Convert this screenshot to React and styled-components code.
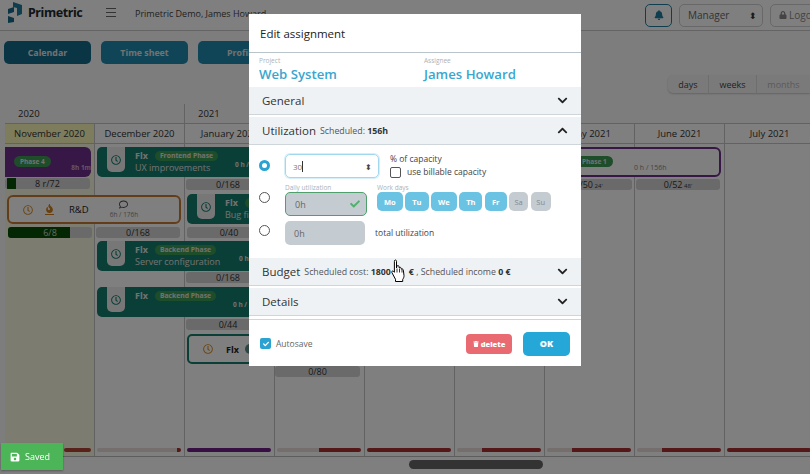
import React from 'react';
import styled, { createGlobalStyle } from 'styled-components';
import { FaBell, FaLock, FaChevronDown, FaChevronUp, FaCheck, FaSave, FaTrash, FaRegClock, FaRegComment, FaFire } from 'react-icons/fa';

const GlobalStyle = createGlobalStyle`
  html, body { margin: 0; padding: 0; background: #fff; overflow: hidden; }
  * { box-sizing: border-box; }
  body { font-family: "Open Sans", "Noto Sans", sans-serif; color: #212529; }
`;

const months = [
  { name: 'November 2020', today: true, inset: 57, bar: [[100, '#b04434']] },
  { name: 'December 2020', bar: [[95, '#e8dcda'], [5, '#a83030']] },
  { name: 'January 2021', bar: [[100, '#6e1f86']] },
  { name: 'February 2021', bar: [[50, '#e8dcda'], [50, '#a83030']] },
  { name: 'March 2021', bar: [[100, '#a83030']] },
  { name: 'April 2021', bar: [[30, '#e8dcda'], [70, '#a83030']] },
  { name: 'May 2021', bar: [[30, '#e8dcda'], [70, '#a83030']] },
  { name: 'June 2021', bar: [[30, '#e8dcda'], [70, '#a83030']] },
  { name: 'July 2021', bar: [[100, '#a83030']] },
];

const days = [
  { label: 'Mo', on: true }, { label: 'Tu', on: true }, { label: 'We', on: true },
  { label: 'Th', on: true }, { label: 'Fr', on: true }, { label: 'Sa' }, { label: 'Su' },
];

const capacities = [
  { x: 5, y: 178, w: 85, label: '8 r/72', fill: 11 },
  { x: 8, y: 227, w: 84, label: '6/8', fill: 74, light: true },
  { x: 96, y: 227, w: 84, label: '0/168' },
  { x: 186, y: 179, w: 84, label: '0/168' },
  { x: 187, y: 227, w: 84, label: '0/40' },
  { x: 186, y: 272, w: 84, label: '0/168' },
  { x: 186, y: 319, w: 84, label: '0/44' },
  { x: 275, y: 366, w: 85, label: '0/80' },
  { x: 545, y: 179, w: 87, label: '0/50', small: '24\'' },
  { x: 636, y: 179, w: 84, label: '0/52', small: '48\'' },
];

const fixes = [
  { x: 97, y: 147, w: 160, phase: 'Frontend Phase', title: 'UX improvements', hours: '0 h /', hoursAt: 138 },
  { x: 187, y: 194, w: 70, phase: 'Frontend Phase', title: 'Bug fixes' },
  { x: 97, y: 241, w: 160, phase: 'Backend Phase', title: 'Server configuration', hours: '0 h', hoursAt: 142 },
  { x: 97, y: 287, w: 160, phase: 'Backend Phase', hours: '0 h /', hoursAt: 136 },
];

const Logo = () => (
  <svg width="15" height="21" viewBox="0 0 15 21">
    <path d="M5 0l9 3v9l-5 2V6L5 5z" fill="#1f7f9f" />
    <path d="M0 7l6-2v5l-6 2zM0 14l6 2v4l-6 1z" fill="#166a88" />
  </svg>
);

const HandCursor = () => (
  <CursorWrap>
    <svg width="16" height="24" viewBox="0 0 16 24">
      <path
        d="M3.5 1.5c.9-.9 2-.4 2 .8V9l.4-2c1-.8 2-.4 2.100.5l.1 1.300c.8-.8 2-.5 2.100.6v.8c.9-.6 2-.2 2.100.9l.7 5.400c.1 1.500-.6 3-1.300 4v2H4.500v-2.200L.9 13.600c-.6-1 .5-2.100 1.500-1.300l1 1V2.500z"
        fill="#fff"
        stroke="#000"
        strokeWidth="1"
      />
      <path d="M6 9.500v4M8.500 9.500v4M11 10.500v3" stroke="#000" strokeWidth="0.8" />
    </svg>
  </CursorWrap>
);

const App = () => {
  return (
    <>
      <GlobalStyle />
      <Page>
        <Header>
          <Brand>
            <Logo />
            <BrandName>Primetric</BrandName>
          </Brand>
          <Burger>
            <span /><span /><span />
          </Burger>
          <HeaderTitle>Primetric Demo, James Howard</HeaderTitle>
          <HeaderRight>
            <BellButton><FaBell size={10} /></BellButton>
            <RoleSelect>Manager<Spinner>⬍</Spinner></RoleSelect>
            <LogoutButton><FaLock size={8} /> Logout</LogoutButton>
          </HeaderRight>
        </Header>
        <NavRow>
          <NavButton $active>Calendar</NavButton>
          <NavButton>Time sheet</NavButton>
          <NavButton>Profile</NavButton>
        </NavRow>
        <ViewRow>
          <ViewTabs>
            <ViewTab $width={40}>days</ViewTab>
            <ViewTab $width={48}>weeks</ViewTab>
            <ViewTab $width={54} $disabled>months</ViewTab>
          </ViewTabs>
        </ViewRow>
        <Timeline>
          <YearRow>
            <YearCell $span={2}>2020</YearCell>
            <YearCell $span={7}>2021</YearCell>
          </YearRow>
          <MonthRow>
            {months.map((m) => (
              <MonthCell key={m.name} $today={m.today}>{m.name}</MonthCell>
            ))}
          </MonthRow>
          <Body>
            {months.map((m) => (
              <Column key={m.name} $today={m.today}>
                <LoadBar $inset={m.inset}>
                  {m.bar.map(([w, c], i) => (
                    <LoadPart key={i} $color={c} style={{ width: `${w}%` }} />
                  ))}
                </LoadBar>
              </Column>
            ))}
            <PurpleCard>
              <PhaseBadge>Phase 4</PhaseBadge>
              <CardHours>8h 1m</CardHours>
            </PurpleCard>
            <OutlinePhase>
              <PhaseBadge>Phase 1</PhaseBadge>
              <OutlineHours>0 h / 156h</OutlineHours>
            </OutlinePhase>
            <RdCard>
              <RdClock><FaRegClock size={10} /></RdClock>
              <RdFlame><FaFire size={9} /></RdFlame>
              <RdName>R&amp;D</RdName>
              <RdMeta>
                <FaRegComment size={9} />
                <span>6h / 176h</span>
              </RdMeta>
            </RdCard>
            {fixes.map((f) => (
              <FixCard key={f.y} $x={f.x} $y={f.y} $w={f.w}>
                <FixTab><FaRegClock size={10} /></FixTab>
                <FixText>
                  <FixHead>
                    Flx
                    <FixPhase>{f.phase}</FixPhase>
                  </FixHead>
                  {f.title && <FixTitle>{f.title}</FixTitle>}
                </FixText>
                {f.hours && <FixHours $left={f.hoursAt}>{f.hours}</FixHours>}
              </FixCard>
            ))}
            <FixOutline>
              <RdClock><FaRegClock size={10} /></RdClock>
              <FixOutlineName>Flx</FixOutlineName>
              <FixOutlineDot />
            </FixOutline>
            {capacities.map((c) => (
              <Capacity key={`${c.x}-${c.y}`} $x={c.x} $y={c.y} $w={c.w}>
                {c.fill && <CapacityFill style={{ width: `${c.fill}%` }} $thin={c.fill < 20} />}
                <CapacityLabel $light={c.light}>{c.label}{c.small && <small> {c.small}</small>}</CapacityLabel>
              </Capacity>
            ))}
          </Body>
          <ScrollTrack>
            <ScrollThumb />
          </ScrollTrack>
        </Timeline>
      </Page>

      <Backdrop />

      <Modal>
        <ModalTitle>Edit assignment</ModalTitle>
        <InfoRow>
          <InfoCell>
            <InfoLabel>Project</InfoLabel>
            <InfoValue>Web System</InfoValue>
          </InfoCell>
          <InfoCell>
            <InfoLabel>Assignee</InfoLabel>
            <InfoValue>James Howard</InfoValue>
          </InfoCell>
        </InfoRow>

        <Section>
          <SectionName>General</SectionName>
          <Chevron><FaChevronDown size={11} /></Chevron>
        </Section>
        <Section>
          <SectionName>Utilization</SectionName>
          <SectionNote>Scheduled: <b>156h</b></SectionNote>
          <Chevron><FaChevronUp size={11} /></Chevron>
        </Section>

        <UtilBody>
          <UtilRow $height={31}>
            <Radio $checked $top={5.5} />
            <PercentInput>
              <span>30<Caret /></span>
              <InputSpinner>⬍</InputSpinner>
            </PercentInput>
            <PercentNotes>
              <span>% of capacity</span>
              <BillableRow><EmptyCheck />use billable capacity</BillableRow>
            </PercentNotes>
          </UtilRow>
          <UtilRow $height={36}>
            <Radio $top={6.5} />
            <Field>
              <FieldLabel>Daily utilization</FieldLabel>
              <HoursInput $valid $width={82}>0h<ValidMark><FaCheck size={10} /></ValidMark></HoursInput>
            </Field>
            <Field>
              <FieldLabel>Work days</FieldLabel>
              <DayRow>
                {days.map((d) => (
                  <DayChip key={d.label} $on={d.on}>{d.label}</DayChip>
                ))}
              </DayRow>
            </Field>
          </UtilRow>
          <UtilRow $height={32}>
            <Radio $top={3.5} />
            <HoursInput $width={80}>0h</HoursInput>
            <TotalLabel>total utilization</TotalLabel>
          </UtilRow>
        </UtilBody>

        <Section>
          <SectionName>Budget</SectionName>
          <SectionNote>Scheduled cost: <b>1800</b><CostGap /><b>€</b> , Scheduled income <b>0 €</b></SectionNote>
          <Chevron><FaChevronDown size={11} /></Chevron>
        </Section>
        <Section>
          <SectionName>Details</SectionName>
          <Chevron><FaChevronDown size={11} /></Chevron>
        </Section>

        <ModalFooter>
          <AutoCheck><FaCheck size={6} /></AutoCheck>
          <AutoLabel>Autosave</AutoLabel>
          <DeleteButton><FaTrash size={6} /> delete</DeleteButton>
          <OkButton>OK</OkButton>
        </ModalFooter>
      </Modal>

      <HandCursor />

      <Toast><FaSave size={10} /> Saved</Toast>
    </>
  );
};

const Page = styled.div`
  width: 810px;
  height: 474px;
  overflow: hidden;
  display: flex;
  flex-direction: column;
  background: #fafafa;
`;

const Header = styled.header`
  height: 31px;
  flex: none;
  display: flex;
  align-items: center;
  padding: 0 0 6px 8px;
  background: #fff;
  border-bottom: 1px solid #c8c8c8;
`;

const Brand = styled.div`
  display: flex;
  align-items: center;
  gap: 5px;
  width: 98px;
`;

const BrandName = styled.span`
  font-size: 12.500px;
  font-weight: 700;
  letter-spacing: -0.4px;
  font-family: "Noto Sans", sans-serif;
  color: #1d2a30;
`;

const Burger = styled.div`
  width: 10px;
  display: flex;
  flex-direction: column;
  gap: 3px;
  margin-right: 19px;

  span {
    height: 1px;
    background: #666;
  }
`;

const HeaderTitle = styled.div`
  font-size: 9px;
  color: #444;
  white-space: nowrap;
  margin-top: 2px;
`;

const HeaderRight = styled.div`
  margin-left: auto;
  display: flex;
  align-items: center;
  gap: 7px;
  margin-top: 6px;
  margin-right: -20px;
`;

const BellButton = styled.div`
  width: 27px;
  height: 23px;
  border: 1px solid #1f7f9f;
  border-radius: 5px;
  display: flex;
  align-items: center;
  justify-content: center;
  color: #1f7f9f;
  background: #fff;
`;

const RoleSelect = styled.div`
  width: 84px;
  height: 23px;
  border: 1px solid #d0d0d0;
  border-radius: 5px;
  display: flex;
  align-items: center;
  justify-content: space-between;
  padding: 0 5px 0 8px;
  font-size: 10px;
  color: #666;
  background: #fff;
`;

const Spinner = styled.span`
  font-size: 9px;
  color: #333;
`;

const LogoutButton = styled.div`
  width: 60px;
  height: 23px;
  border: 1px solid #d0d0d0;
  border-radius: 5px;
  display: flex;
  align-items: center;
  gap: 2px;
  padding-left: 8px;
  font-size: 10px;
  color: #888;
  white-space: nowrap;
`;

const NavRow = styled.nav`
  flex: none;
  display: flex;
  gap: 10px;
  padding: 10px 0 0 4px;
`;

const NavButton = styled.div`
  width: 87px;
  height: 23px;
  border-radius: 5px;
  display: flex;
  align-items: center;
  justify-content: center;
  font-size: 8.800px;
  font-weight: 700;
  color: #e4e4e4;
  background: ${(p) => (p.$active ? '#146a89' : '#1e8bad')};
`;

const ViewRow = styled.div`
  flex: none;
  height: 40px;
  display: flex;
  justify-content: flex-end;
  padding-top: 11px;
`;

const ViewTabs = styled.div`
  display: flex;
  height: 18px;
  border-radius: 5px 0 0 5px;
  background: #f5f5f5;
  box-shadow: 0 1px 2px rgba(0, 0, 0, 0.2);
`;

const ViewTab = styled.div`
  width: ${(p) => p.$width}px;
  display: flex;
  align-items: center;
  justify-content: center;
  font-size: 9px;
  color: ${(p) => (p.$disabled ? '#b5b5b5' : '#444')};
  border-left: 1px solid #ddd;

  &:first-child {
    border-left: 0;
  }
`;

const Timeline = styled.section`
  flex: 1;
  min-height: 0;
  display: flex;
  flex-direction: column;
  margin-left: 5px;
  background: #fff;
  overflow: hidden;
`;

const YearRow = styled.div`
  flex: none;
  display: flex;
  height: 20px;
  background: #fbfbfb;
  border-bottom: 1px solid #c4c4c4;
`;

const YearCell = styled.div`
  width: ${(p) => p.$span * 90}px;
  flex: none;
  padding-left: 13px;
  display: flex;
  align-items: center;
  font-size: 9.500px;
  font-weight: 500;
  color: #333;
  border-right: 1px solid #c4c4c4;
`;

const MonthRow = styled.div`
  flex: none;
  display: flex;
  height: 20px;
  border-bottom: 1px solid #c4c4c4;
`;

const MonthCell = styled.div`
  width: 90px;
  flex: none;
  display: flex;
  align-items: center;
  justify-content: center;
  white-space: nowrap;
  overflow: hidden;
  font-size: 9.500px;
  font-weight: 500;
  color: #333;
  background: ${(p) => (p.$today ? '#fbf9b8' : '#fff')};
  border-right: 1px solid #c4c4c4;
`;

const Body = styled.div`
  flex: 1;
  min-height: 0;
  position: relative;
  display: flex;
  margin-left: -5px;
  padding-left: 5px;
  border-bottom: 1px solid #bbb;
`;

const Column = styled.div`
  width: 90px;
  flex: none;
  display: flex;
  flex-direction: column;
  justify-content: flex-end;
  padding: 0 3px 4px 2px;
  background: ${(p) => (p.$today ? '#f9f8e2' : '#fff')};
  border-right: 1px solid #c4c4c4;
`;

const LoadBar = styled.div`
  height: 4px;
  display: flex;
  border-radius: 2px;
  overflow: hidden;
  margin-left: ${(p) => p.$inset || 0}px;
`;

const LoadPart = styled.div`
  height: 100%;
  background: ${(p) => p.$color};
`;

const PurpleCard = styled.div`
  position: absolute;
  left: 4px;
  top: 3px;
  width: 87px;
  height: 30px;
  border-radius: 0 6px 6px 0;
  background: #6e2f8a;
`;

const PhaseBadge = styled.span`
  position: absolute;
  left: 10px;
  top: 9px;
  height: 11px;
  padding: 0 6px;
  border-radius: 6px;
  font-size: 6.500px;
  font-weight: 700;
  line-height: 11px;
  color: #e4e4e4;
  white-space: nowrap;
  background: #3d9a55;
`;

const CardHours = styled.span`
  position: absolute;
  right: 0;
  bottom: 5px;
  font-size: 6.500px;
  font-weight: 700;
  white-space: nowrap;
  color: #c9a9d8;
`;

const OutlinePhase = styled.div`
  position: absolute;
  left: 500px;
  top: 3px;
  width: 221px;
  height: 30px;
  border: 2px solid #6e2f8a;
  border-radius: 6px;
  background: #fff;

  ${PhaseBadge} {
    left: 74px;
    top: 7px;
  }
`;

const OutlineHours = styled.span`
  position: absolute;
  left: 132px;
  bottom: 3px;
  font-size: 7px;
  color: #888;
  white-space: nowrap;
`;

const RdCard = styled.div`
  position: absolute;
  left: 7px;
  top: 51px;
  width: 174px;
  height: 29px;
  border: 2px solid #c77a35;
  border-radius: 6px;
  background: #fff;
  display: flex;
  align-items: center;
  padding-left: 14px;
`;

const RdClock = styled.span`
  display: flex;
  color: #d98f2c;
  margin-right: 12px;
`;

const RdFlame = styled.span`
  display: flex;
  color: #d07f1c;
  padding-bottom: 1px;
  border-bottom: 1px solid #d07f1c;
  margin-right: 15px;
`;

const RdName = styled.span`
  font-size: 9.500px;
  font-weight: 500;
  color: #222;
  margin-right: 21px;
`;

const RdMeta = styled.div`
  display: flex;
  flex-direction: column;
  align-items: center;
  gap: 1px;
  font-size: 6.500px;
  color: #888;
  white-space: nowrap;

  svg {
    color: #444;
  }
`;

const FixCard = styled.div`
  position: absolute;
  left: ${(p) => p.$x}px;
  top: ${(p) => p.$y - 144}px;
  width: ${(p) => p.$w}px;
  height: 30px;
  display: flex;
  padding-left: 10px;
  border-radius: 5px;
  background: #137f6d;
  color: #e4e4e4;
`;

const FixTab = styled.div`
  width: 18px;
  height: 25px;
  flex: none;
  display: flex;
  align-items: center;
  justify-content: center;
  border-radius: 0 0 5px 5px;
  background: #eee;
  color: #137f6d;
`;

const FixText = styled.div`
  margin-left: 10px;
  padding-top: 2px;
  white-space: nowrap;
`;

const FixHead = styled.div`
  display: flex;
  align-items: center;
  gap: 7px;
  height: 13px;
  font-size: 9px;
  font-weight: 700;
`;

const FixPhase = styled.span`
  padding: 0 5px;
  height: 10px;
  border-radius: 5px;
  font-size: 6.800px;
  line-height: 10px;
  background: #3d9a55;
`;

const FixTitle = styled.div`
  font-size: 9px;
  line-height: 12px;
`;

const FixHours = styled.span`
  position: absolute;
  left: ${(p) => p.$left}px;
  bottom: 8px;
  font-size: 6.500px;
  font-weight: 700;
  white-space: nowrap;
`;

const FixOutline = styled.div`
  position: absolute;
  left: 187px;
  top: 190px;
  width: 70px;
  height: 30px;
  display: flex;
  align-items: center;
  padding-left: 14px;
  border: 2px solid #137f6d;
  border-radius: 5px;
  background: #fff;
`;

const FixOutlineName = styled.span`
  margin-left: 1px;
  font-size: 9px;
  font-weight: 700;
  color: #222;
`;

const FixOutlineDot = styled.span`
  width: 10px;
  height: 10px;
  margin-left: 6px;
  border-radius: 5px;
  background: #5b8a87;
`;

const Capacity = styled.div`
  position: absolute;
  left: ${(p) => p.$x}px;
  top: ${(p) => p.$y - 144}px;
  width: ${(p) => p.$w}px;
  height: 11px;
  border-radius: 3px;
  overflow: hidden;
  background: #d5d5d5;
`;

const CapacityFill = styled.div`
  position: absolute;
  left: ${(p) => (p.$thin ? '2px' : 0)};
  top: 0;
  bottom: 0;
  background: #064f06;
`;

const CapacityLabel = styled.div`
  position: relative;
  text-align: center;
  font-size: 9px;
  line-height: 11px;
  color: ${(p) => (p.$light ? '#c9d6c9' : '#333')};

  small {
    font-size: 6px;
  }
`;

const ScrollTrack = styled.div`
  flex: none;
  height: 17px;
  margin-left: -5px;
  padding: 3px 0 0 409px;
`;

const ScrollThumb = styled.div`
  width: 134px;
  height: 9px;
  border-radius: 5px;
  background: #666;
`;

const Backdrop = styled.div`
  position: fixed;
  inset: 0;
  z-index: 10;
  background: rgba(0, 0, 0, 0.5);
`;

const Modal = styled.div`
  position: fixed;
  left: 249px;
  top: 14px;
  z-index: 20;
  width: 332px;
  height: 352px;
  display: flex;
  flex-direction: column;
  background: #fff;
  overflow: hidden;
`;

const ModalTitle = styled.div`
  flex: none;
  height: 39px;
  padding-left: 11px;
  display: flex;
  align-items: center;
  font-size: 11.500px;
  color: #222;
  border-bottom: 1px solid #b9c3ca;
`;

const InfoRow = styled.div`
  flex: none;
  height: 34px;
  display: grid;
  grid-template-columns: 165px 1fr;
  padding: 3px 0 0 10px;
`;

const InfoCell = styled.div`
  display: flex;
  flex-direction: column;
`;

const InfoLabel = styled.span`
  font-size: 6.500px;
  line-height: 9px;
  color: #aab2b8;
`;

const InfoValue = styled.span`
  font-size: 13.200px;
  line-height: 18px;
  font-weight: 600;
  color: #3aa6cf;
`;

const Section = styled.div`
  flex: none;
  height: 28px;
  display: flex;
  align-items: center;
  padding: 0 13px;
  margin-bottom: 2px;
  background: #eef2f5;
  border-bottom: 1px solid #cfd6db;
`;

const SectionName = styled.span`
  font-size: 11.500px;
  color: #333;
`;

const SectionNote = styled.span`
  margin-left: 4px;
  font-size: 8.800px;
  color: #555;
  white-space: nowrap;

  b {
    color: #333;
  }
`;

const CostGap = styled.span`
  display: inline-block;
  width: 18px;
`;

const Chevron = styled.span`
  margin-left: auto;
  display: flex;
  color: #222;
`;

const UtilBody = styled.div`
  flex: none;
  height: 112px;
  margin-top: -1px;
  padding: 8px 0 0 10px;
  display: flex;
  flex-direction: column;
`;

const UtilRow = styled.div`
  height: ${(p) => p.$height}px;
  display: flex;
  align-items: flex-start;
`;

const Radio = styled.span`
  width: 11px;
  height: 11px;
  flex: none;
  margin-top: ${(p) => p.$top}px;
  margin-right: 15px;
  border-radius: 50%;
  border: ${(p) => (p.$checked ? '3.500px solid #2aa3d2' : '1px solid #555')};
  background: #fff;
`;

const PercentInput = styled.div`
  width: 94px;
  height: 24px;
  flex: none;
  display: flex;
  align-items: center;
  justify-content: space-between;
  padding: 0 6px 0 7px;
  border: 1px solid #9fd8ef;
  border-radius: 5px;
  box-shadow: 0 0 0 1px #d6eff9;
  font-size: 8px;
  color: #777;
`;

const Caret = styled.span`
  display: inline-block;
  width: 1px;
  height: 11px;
  vertical-align: -2px;
  background: #333;
`;

const InputSpinner = styled.span`
  font-size: 8px;
  color: #444;
`;

const PercentNotes = styled.div`
  margin-left: 11px;
  margin-top: -1px;
  display: flex;
  flex-direction: column;
  gap: 1px;
  font-size: 8.500px;
  line-height: 12px;
  color: #444;
`;

const BillableRow = styled.div`
  display: flex;
  align-items: center;
  gap: 6px;
`;

const EmptyCheck = styled.span`
  width: 11px;
  height: 11px;
  border: 1px solid #555;
  border-radius: 2px;
`;

const Field = styled.div`
  display: flex;
  flex-direction: column;
  margin-right: 10px;
`;

const FieldLabel = styled.span`
  font-size: 6.500px;
  line-height: 9px;
  height: 9px;
  margin-top: -2px;
  color: #aab2b8;
`;

const HoursInput = styled.div`
  position: relative;
  width: ${(p) => p.$width}px;
  height: 24px;
  flex: none;
  display: flex;
  align-items: center;
  padding-left: 9px;
  font-size: 9px;
  color: #666;
  border-radius: 5px;
  background: #c4ccd2;
  border: ${(p) => (p.$valid ? '1px solid #4fa06d' : '0')};
`;

const ValidMark = styled.span`
  position: absolute;
  right: 6px;
  top: 6px;
  display: flex;
  color: #52b06d;
`;

const DayRow = styled.div`
  display: flex;
  gap: 2.500px;
`;

const DayChip = styled.span`
  height: 19px;
  padding: 0 ${(p) => (p.$on ? 7 : 5.500)}px;
  display: flex;
  align-items: center;
  justify-content: center;
  border-radius: 5px;
  font-size: 7.500px;
  font-weight: ${(p) => (p.$on ? 700 : 400)};
  color: ${(p) => (p.$on ? '#fff' : '#7f8a92')};
  background: ${(p) => (p.$on ? '#6bc3e3' : '#c4ccd2')};
`;

const TotalLabel = styled.span`
  margin-left: 10px;
  margin-top: 6px;
  font-size: 8.500px;
  line-height: 12px;
  color: #444;
`;

const ModalFooter = styled.div`
  flex: none;
  height: 46px;
  margin-top: 1px;
  display: flex;
  align-items: center;
  padding: 2px 11px 0;
  border-top: 1px solid #cfd6db;
`;

const AutoCheck = styled.span`
  width: 11px;
  height: 11px;
  display: flex;
  align-items: center;
  justify-content: center;
  border-radius: 2px;
  color: #fff;
  background: #2aa3d2;
`;

const AutoLabel = styled.span`
  margin-left: 5px;
  font-size: 8.500px;
  color: #666;
`;

const DeleteButton = styled.div`
  margin-left: auto;
  width: 46px;
  height: 20px;
  display: flex;
  align-items: center;
  justify-content: center;
  gap: 2px;
  border-radius: 4px;
  font-size: 7.500px;
  font-weight: 800;
  color: #fff;
  background: #ea6a72;
`;

const OkButton = styled.div`
  margin-left: 11px;
  width: 47px;
  height: 24px;
  display: flex;
  align-items: center;
  justify-content: center;
  border-radius: 5px;
  font-size: 9px;
  font-weight: 800;
  color: #fff;
  background: #25a8d8;
`;

const CursorWrap = styled.div`
  position: fixed;
  left: 391px;
  top: 259px;
  z-index: 30;
  line-height: 0;
`;

const Toast = styled.div`
  position: fixed;
  left: 1px;
  top: 443px;
  z-index: 20;
  width: 62px;
  height: 27px;
  display: flex;
  align-items: center;
  gap: 5px;
  padding-left: 9px;
  font-size: 9px;
  color: #fff;
  background: #4cb558;
  box-shadow: 0 1px 2px rgba(0, 0, 0, 0.3);
`;

export default App;
